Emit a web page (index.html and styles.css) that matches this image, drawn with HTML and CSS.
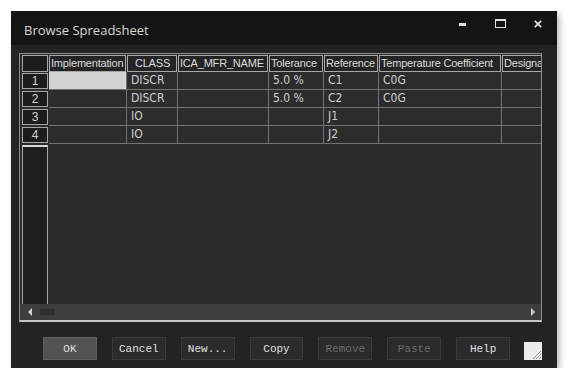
FILE: index.html
```html
<!DOCTYPE html>
<html lang="en">
<head>
    <meta charset="UTF-8">
    <meta name="viewport" content="width=device-width, initial-scale=1.0">
    <title>Browse Spreadsheet</title>
    <link rel="stylesheet" href="styles.css">
</head>
<body>
    <div class="window">
        <div class="titlebar">
            <span class="title">Browse Spreadsheet</span>
            <div class="controls">
                <span class="ctl-min"></span>
                <span class="ctl-max"></span>
                <svg class="ctl-close" width="8" height="8" viewBox="0 0 8 8">
                    <path d="M0.8 0.8 L7.2 7.2 M7.2 0.8 L0.8 7.2" stroke="#e2e2e2" stroke-width="1.7"/>
                </svg>
            </div>
        </div>

        <div class="body">
            <div class="sheet">
                <div class="grid">
                    <div class="row head">
                        <div class="rh corner"></div>
                        <div class="hc c-impl">Implementation</div>
                        <div class="hc c-class center">CLASS</div>
                        <div class="hc c-ica">ICA_MFR_NAME</div>
                        <div class="hc c-tol">Tolerance</div>
                        <div class="hc c-ref">Reference</div>
                        <div class="hc c-temp">Temperature Coefficient</div>
                        <div class="hc c-des">Designator</div>
                    </div>

                    <div class="row">
                        <div class="rh">1</div>
                        <div class="cell c-impl selected"></div>
                        <div class="cell c-class">DISCR</div>
                        <div class="cell c-ica"></div>
                        <div class="cell c-tol">5.0 %</div>
                        <div class="cell c-ref">C1</div>
                        <div class="cell c-temp">C0G</div>
                        <div class="cell c-des"></div>
                    </div>
                    <div class="row">
                        <div class="rh">2</div>
                        <div class="cell c-impl"></div>
                        <div class="cell c-class">DISCR</div>
                        <div class="cell c-ica"></div>
                        <div class="cell c-tol">5.0 %</div>
                        <div class="cell c-ref">C2</div>
                        <div class="cell c-temp">C0G</div>
                        <div class="cell c-des"></div>
                    </div>
                    <div class="row">
                        <div class="rh">3</div>
                        <div class="cell c-impl"></div>
                        <div class="cell c-class">IO</div>
                        <div class="cell c-ica"></div>
                        <div class="cell c-tol"></div>
                        <div class="cell c-ref">J1</div>
                        <div class="cell c-temp"></div>
                        <div class="cell c-des"></div>
                    </div>
                    <div class="row">
                        <div class="rh">4</div>
                        <div class="cell c-impl"></div>
                        <div class="cell c-class">IO</div>
                        <div class="cell c-ica"></div>
                        <div class="cell c-tol"></div>
                        <div class="cell c-ref">J2</div>
                        <div class="cell c-temp"></div>
                        <div class="cell c-des"></div>
                    </div>

                    <div class="filler">
                        <div class="rh-rest"></div>
                    </div>
                </div>

                <div class="hscroll">
                    <span class="arrow-left"></span>
                    <span class="thumb"></span>
                    <span class="arrow-right"></span>
                </div>
            </div>

            <div class="buttons">
                <button class="btn default">OK</button>
                <button class="btn">Cancel</button>
                <button class="btn">New...</button>
                <button class="btn">Copy</button>
                <button class="btn" disabled>Remove</button>
                <button class="btn" disabled>Paste</button>
                <button class="btn">Help</button>
                <span class="grip">
                    <svg width="18" height="18" viewBox="0 0 18 18">
                        <path d="M17 9 L9 17 M17 12 L12 17 M17 15 L15 17" stroke="#9a9a9a" stroke-width="1"/>
                    </svg>
                </span>
            </div>
        </div>
    </div>
</body>
</html>
```

FILE: styles.css
```css
/* Page */
body {
    margin: 0;
    background-color: #ffffff;
    font-family: "Liberation Sans", Arial, sans-serif;
}

.window {
    width: 546px;
    height: 357px;
    margin: 11px 0 0 11px;
    background-color: #232323;
    display: flex;
    flex-direction: column;
    box-shadow: 3px 3px 6px rgba(0, 0, 0, 0.25);
}

/* Title bar */
.titlebar {
    height: 34px;
    flex: none;
    background-color: #141414;
    display: flex;
    align-items: flex-start;
    padding: 0 15px 0 13px;
}

.title {
    flex: 1;
    margin-top: 11px;
    font: 13px/16px "Open Sans", sans-serif;
    color: #d6d6d6;
}

.controls {
    display: flex;
    align-items: flex-start;
    margin-top: 8px;
}

.ctl-min {
    width: 7px;
    height: 3px;
    margin-top: 4px;
    background-color: #e0e0e0;
}

.ctl-max {
    width: 11px;
    height: 9px;
    box-sizing: border-box;
    margin-left: 29px;
    border: 1px solid #e0e0e0;
    border-top-width: 2px;
}

.ctl-close {
    margin-left: 28px;
    margin-top: 1px;
}

/* Body */
.body {
    flex: 1;
    display: flex;
    flex-direction: column;
    padding: 8px 15px 0 8px;
}

.sheet {
    height: 269px;
    box-sizing: border-box;
    border: 1px solid #8d8d8d;
    border-bottom: 2px solid #c4c4c4;
    background-color: #2b2b2b;
    display: flex;
    flex-direction: column;
    overflow: hidden;
}

.grid {
    flex: 1;
    display: flex;
    flex-direction: column;
    padding: 1px 0 0 2px;
    overflow: hidden;
}

.row {
    display: flex;
    flex: none;
    height: 18px;
}

.row.head {
    height: 17px;
}

/* Row headers */
.rh {
    width: 26px;
    height: 16px;
    flex: none;
    box-sizing: border-box;
    margin: 1px 1px 0 0;
    border: 1px solid #a6a6a6;
    background-color: #1c1c1c;
    color: #d2d2d2;
    text-align: center;
    font-size: 12px;
    line-height: 14px;
}

.rh.corner {
    height: 17px;
    margin-top: 0;
}

/* Column headers */
.hc {
    height: 17px;
    flex: none;
    box-sizing: border-box;
    margin-right: 1px;
    padding-left: 1px;
    border: 1px solid #a8a8a8;
    background-color: #242424;
    color: #dcdcdc;
    font-size: 11px;
    line-height: 15px;
    letter-spacing: -0.2px;
    white-space: nowrap;
    overflow: hidden;
}

.hc.center {
    text-align: center;
}

.hc.c-impl { width: 77px; }
.hc.c-class { width: 50px; }
.hc.c-ica { width: 90px; }
.hc.c-tol { width: 54px; }
.hc.c-ref { width: 54px; }
.hc.c-temp { width: 122px; }
.hc.c-des { width: 60px; }

/* Data cells */
.cell {
    height: 18px;
    flex: none;
    box-sizing: border-box;
    padding-left: 4px;
    border-right: 1px solid #737373;
    border-bottom: 1px solid #737373;
    background-color: #2c2c2c;
    color: #d0d0d0;
    font-family: "Liberation Sans Narrow", "DejaVu Sans Condensed", sans-serif;
    font-size: 12px;
    line-height: 17px;
    white-space: nowrap;
}

.cell.selected {
    background-color: #d3d3d3;
}

.cell.c-impl { width: 78px; }
.cell.c-class { width: 51px; }
.cell.c-ica { width: 91px; }
.cell.c-tol { width: 55px; }
.cell.c-ref { width: 55px; }
.cell.c-temp { width: 123px; }
.cell.c-des { width: 60px; }

.filler {
    flex: 1;
    display: flex;
}

.rh-rest {
    width: 26px;
    box-sizing: border-box;
    margin-top: 1px;
    border-left: 1px solid #a6a6a6;
    border-right: 1px solid #a6a6a6;
    border-top: 2px solid #d8d8d8;
    background-color: #1f1f1f;
}

/* Horizontal scrollbar */
.hscroll {
    height: 16px;
    flex: none;
    display: flex;
    align-items: center;
    padding: 0 6px 0 8px;
    background-color: #3d3d3d;
}

.arrow-left {
    width: 0;
    height: 0;
    border-top: 4px solid transparent;
    border-bottom: 4px solid transparent;
    border-right: 4px solid #cfcfcf;
}

.thumb {
    width: 15px;
    height: 6px;
    margin-left: 8px;
    background-color: #2e2e2e;
}

.arrow-right {
    width: 0;
    height: 0;
    margin-left: auto;
    border-top: 4px solid transparent;
    border-bottom: 4px solid transparent;
    border-left: 4px solid #cfcfcf;
}

/* Buttons */
.buttons {
    display: flex;
    align-items: flex-end;
    gap: 15px;
    margin-top: 15px;
    padding-left: 24px;
}

.btn {
    width: 55px;
    height: 23px;
    padding: 0;
    box-sizing: border-box;
    background-color: #2b2b2b;
    border: 1px solid #3a3a3a;
    color: #e0e0e0;
    font-family: "Liberation Mono", "Courier New", monospace;
    font-size: 11px;
}

.btn.default {
    background-color: #535353;
    border-color: #606060;
}

.btn:disabled {
    color: #6b6b6b;
}

.grip {
    width: 18px;
    height: 18px;
    margin-left: -1px;
    background-color: #ececec;
    display: block;
}

.grip svg {
    display: block;
}
```
